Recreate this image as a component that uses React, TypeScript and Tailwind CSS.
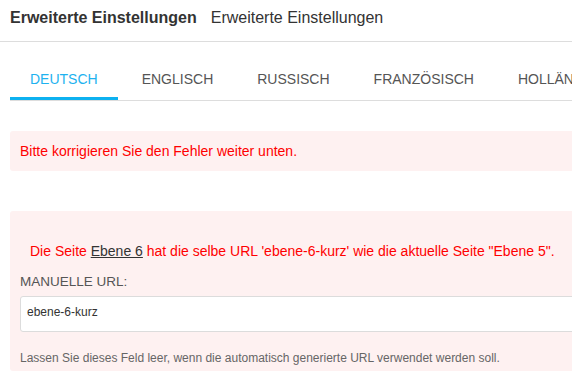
import React from "react";

const tabs = ["Deutsch", "Englisch", "Russisch", "Französisch", "Holländisch"];

export default function App() {
  return (
    <div className="w-[572px] h-[382px] overflow-hidden bg-white font-['Liberation_Sans',Arial,sans-serif]">
      <div className="w-[720px]">
        <div className="h-[42px] border-b border-[#dddddd] pl-[10px] pt-[6px] flex text-[16px] leading-6 text-[#333333]">
          <span className="font-bold">Erweiterte Einstellungen</span>
          <span className="ml-[14px]">Erweiterte Einstellungen</span>
        </div>
        <div className="px-[10px]">
          <div className="mt-[27px] flex border-b border-[#dddddd]">
            {tabs.map((t, i) => (
              <div
                key={t}
                className={
                  i === 0
                    ? "px-[20px] pb-2 mr-[4px] border-b-[3px] border-[#0db1f0] text-[14px] leading-5 uppercase text-[#1eb2ef]"
                    : "px-[20px] pb-2 mr-[4px] border-b-[3px] border-transparent text-[14px] leading-5 uppercase text-[#555555]"
                }
              >
                {t}
              </div>
            ))}
          </div>
          <div className="mt-[30px] rounded-[3px] bg-[#fef1f1] px-[10px] py-[10px] text-[14px] leading-5 text-[#ff0000]">
            Bitte korrigieren Sie den Fehler weiter unten.
          </div>
          <div className="mt-[40px] rounded-[3px] bg-[#fef1f1] px-[10px] pt-[30px] pb-[5px]">
            <div className="pl-[10px] text-[14px] leading-5 text-[#ff0000]">
              Die Seite <a className="underline text-[#333333]">Ebene 6</a> hat die selbe URL 'ebene-6-kurz' wie die aktuelle Seite "Ebene 5".
            </div>
            <div className="mt-[13px] text-[13.5px] leading-4 uppercase text-[#555555]">Manuelle URL:</div>
            <div className="mt-[6px] h-[36px] rounded-[3px] border border-[#dcdcdc] bg-white pl-[6px] pt-[8px] text-[12px] leading-[14px] text-[#333333]">
              ebene-6-kurz
            </div>
            <div className="mt-[18px] text-[12px] leading-4 text-[#666666]">
              Lassen Sie dieses Feld leer, wenn die automatisch generierte URL verwendet werden soll.
            </div>
          </div>
        </div>
      </div>
    </div>
  );
}
